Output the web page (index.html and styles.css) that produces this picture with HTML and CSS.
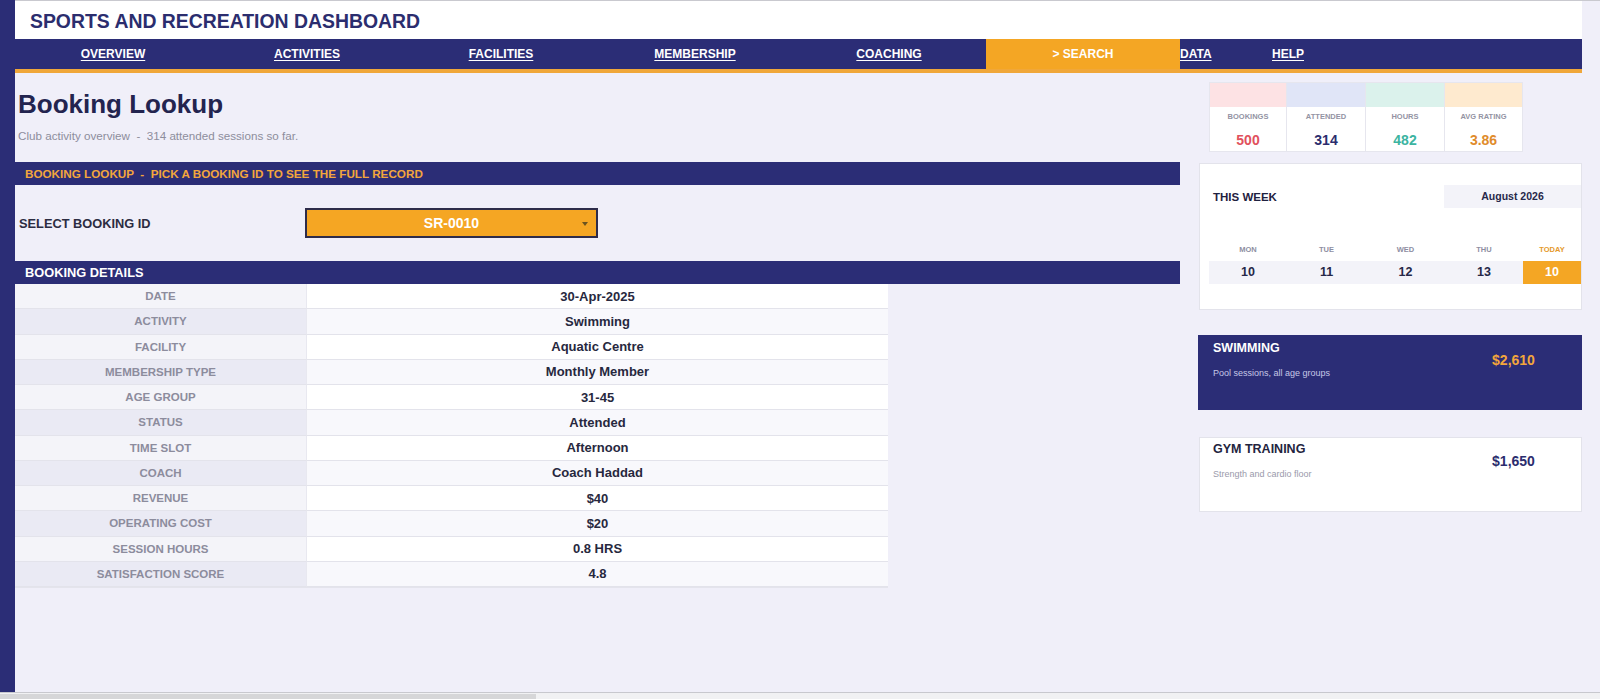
FILE: index.html
```html
<!DOCTYPE html>
<html lang="en">
<head>
<meta charset="utf-8">
<title>Sports and Recreation Dashboard</title>
<link rel="stylesheet" href="styles.css">
</head>
<body>
<div class="window">
  <div class="frame">
    <div class="rail"></div>
    <div class="sheet">
      <header class="masthead">
        <h1 class="masthead-title">SPORTS AND RECREATION DASHBOARD</h1>
      </header>
      <nav class="tabs">
        <a class="tab">OVERVIEW</a>
        <a class="tab">ACTIVITIES</a>
        <a class="tab">FACILITIES</a>
        <a class="tab">MEMBERSHIP</a>
        <a class="tab">COACHING</a>
        <a class="tab tab-active">&gt; SEARCH</a>
        <a class="tab tab-left tab-data">DATA</a>
        <a class="tab tab-left">HELP</a>
      </nav>

      <div class="board">
        <main class="lookup">
          <h2 class="page-title">Booking Lookup</h2>
          <p class="page-sub">Club activity overview  -  314 attended sessions so far.</p>

          <div class="band band-accent">BOOKING LOOKUP  -  PICK A BOOKING ID TO SEE THE FULL RECORD</div>

          <div class="picker">
            <span class="picker-label">SELECT BOOKING ID</span>
            <div class="picker-box">
              <span class="picker-value">SR-0010</span>
              <span class="picker-caret"></span>
            </div>
          </div>

          <div class="band band-plain">BOOKING DETAILS</div>

          <div class="record">
            <div class="rec-key">DATE</div><div class="rec-val">30-Apr-2025</div>
            <div class="rec-key alt">ACTIVITY</div><div class="rec-val alt">Swimming</div>
            <div class="rec-key">FACILITY</div><div class="rec-val">Aquatic Centre</div>
            <div class="rec-key alt">MEMBERSHIP TYPE</div><div class="rec-val alt">Monthly Member</div>
            <div class="rec-key">AGE GROUP</div><div class="rec-val">31-45</div>
            <div class="rec-key alt">STATUS</div><div class="rec-val alt">Attended</div>
            <div class="rec-key">TIME SLOT</div><div class="rec-val">Afternoon</div>
            <div class="rec-key alt">COACH</div><div class="rec-val alt">Coach Haddad</div>
            <div class="rec-key">REVENUE</div><div class="rec-val">$40</div>
            <div class="rec-key alt">OPERATING COST</div><div class="rec-val alt">$20</div>
            <div class="rec-key">SESSION HOURS</div><div class="rec-val">0.8 HRS</div>
            <div class="rec-key alt">SATISFACTION SCORE</div><div class="rec-val alt">4.8</div>
          </div>
        </main>

        <aside class="side">
          <div class="kpis">
            <div class="kpi">
              <div class="kpi-strip strip-pink"></div>
              <div class="kpi-label">BOOKINGS</div>
              <div class="kpi-value val-red">500</div>
            </div>
            <div class="kpi">
              <div class="kpi-strip strip-blue"></div>
              <div class="kpi-label">ATTENDED</div>
              <div class="kpi-value val-navy">314</div>
            </div>
            <div class="kpi">
              <div class="kpi-strip strip-mint"></div>
              <div class="kpi-label">HOURS</div>
              <div class="kpi-value val-teal">482</div>
            </div>
            <div class="kpi">
              <div class="kpi-strip strip-cream"></div>
              <div class="kpi-label">AVG RATING</div>
              <div class="kpi-value val-orange">3.86</div>
            </div>
          </div>

          <section class="week">
            <div class="week-head">
              <span class="week-title">THIS WEEK</span>
              <span class="week-month">August 2026</span>
            </div>
            <div class="week-grid">
              <span class="day-name">MON</span>
              <span class="day-name">TUE</span>
              <span class="day-name">WED</span>
              <span class="day-name">THU</span>
              <span class="day-name day-today">TODAY</span>
              <span class="day-num">10</span>
              <span class="day-num">11</span>
              <span class="day-num">12</span>
              <span class="day-num">13</span>
              <span class="day-num day-num-today">10</span>
            </div>
          </section>

          <section class="tile tile-dark">
            <div class="tile-text">
              <div class="tile-title">SWIMMING</div>
              <div class="tile-sub">Pool sessions, all age groups</div>
            </div>
            <div class="tile-amount">$2,610</div>
          </section>

          <section class="tile tile-light">
            <div class="tile-text">
              <div class="tile-title">GYM TRAINING</div>
              <div class="tile-sub">Strength and cardio floor</div>
            </div>
            <div class="tile-amount">$1,650</div>
          </section>
        </aside>
      </div>
    </div>
  </div>
  <div class="hscroll"><div class="hscroll-thumb"></div></div>
</div>
</body>
</html>
```

FILE: styles.css
```css
* {
  box-sizing: border-box;
}

html, body {
  margin: 0;
  padding: 0;
}

body {
  width: 1600px;
  height: 699px;
  overflow: hidden;
  font-family: "Liberation Sans", Arial, sans-serif;
  background: #f0eff9;
}

.window {
  display: flex;
  flex-direction: column;
  height: 699px;
}

.frame {
  display: flex;
  height: 692px;
}

.rail {
  width: 15px;
  flex: none;
  background: #2b2d76;
}

.sheet {
  flex: 1;
  border-top: 1px solid #c9c9cf;
  background: #f0eff9;
  display: flex;
  flex-direction: column;
}

/* title strip */
.masthead {
  width: 1567px;
  height: 38px;
  background: #ffffff;
  display: flex;
  align-items: center;
  padding-left: 15px;
}

.masthead-title {
  margin: 0;
  font-size: 19.4px;
  font-weight: 700;
  color: #2b2d6e;
  line-height: 22px;
  padding-top: 1px;
}

/* navigation */
.tabs {
  width: 1567px;
  height: 34px;
  background: #2b2d76;
  border-bottom: 4px solid #f0a73a;
  display: flex;
  padding-left: 1px;
}

.tab {
  width: 194px;
  flex: none;
  text-align: center;
  line-height: 30px;
  font-size: 12px;
  font-weight: 700;
  color: #ffffff;
  text-decoration: underline;
  text-underline-offset: 2px;
}

.tab-active {
  background: #f4a624;
  text-decoration: none;
}

.tab-left {
  text-align: left;
  width: auto;
}

.tab-data {
  width: 92px;
}

/* body */
.board {
  display: flex;
  flex: 1;
}

.lookup {
  width: 1165px;
  flex: none;
  display: flex;
  flex-direction: column;
}

.page-title {
  margin: 16px 0 0 3px;
  font-size: 26px;
  line-height: 30px;
  font-weight: 700;
  color: #23244f;
}

.page-sub {
  margin: 10px 0 0 3px;
  font-size: 11.65px;
  line-height: 14px;
  color: #8d8d9c;
  white-space: pre;
}

.band {
  height: 23px;
  background: #2b2d76;
  padding-left: 10px;
  font-weight: 700;
  line-height: 23px;
  white-space: pre;
}

.band-accent {
  margin-top: 19px;
  font-size: 11.7px;
  color: #f3a63c;
}

.band-plain {
  font-size: 12.8px;
  color: #ffffff;
}

.picker {
  display: flex;
  align-items: center;
  margin: 23px 0 23px 0;
  padding-left: 4px;
}

.picker-label {
  width: 286px;
  font-size: 12.8px;
  font-weight: 700;
  color: #2c2c42;
}

.picker-box {
  position: relative;
  width: 293px;
  height: 30px;
  background: #f5a623;
  border: 2px solid #2e2c4a;
  display: flex;
  align-items: center;
  justify-content: center;
}

.picker-value {
  font-size: 14px;
  font-weight: 700;
  color: #ffffff;
}

.picker-caret {
  position: absolute;
  right: 8px;
  top: 12px;
  width: 0;
  height: 0;
  border-left: 3.5px solid transparent;
  border-right: 3.5px solid transparent;
  border-top: 4px solid #6b5420;
}

/* record table */
.record {
  width: 873px;
  display: grid;
  grid-template-columns: 292px 581px;
  grid-auto-rows: 25.25px;
  box-shadow: 0 1px 0 #e4e4ec;
}

.rec-key,
.rec-val {
  display: flex;
  align-items: center;
  justify-content: center;
  border-bottom: 1px solid #e3e3eb;
}

.rec-key {
  background: #f4f4f9;
  border-right: 1px solid #e8e8f0;
  font-size: 11.5px;
  font-weight: 700;
  color: #8c8c9d;
}

.rec-key.alt {
  background: #eaeaf4;
}

.rec-val {
  background: #ffffff;
  font-size: 13px;
  font-weight: 700;
  color: #27283e;
}

.rec-val.alt {
  background: #f8f8fc;
}

/* right column */
.side {
  width: 402px;
  flex: none;
  display: flex;
  flex-direction: column;
  padding-left: 19px;
}

.kpis {
  margin: 9px 0 0 10px;
  display: grid;
  grid-template-columns: 78px 79px 79px 78px;
  width: 314px;
}

.kpi {
  height: 70px;
  background: #ffffff;
  border: 1px solid #e6e6ee;
  border-left-width: 0;
  display: flex;
  flex-direction: column;
  align-items: center;
}

.kpi:first-child {
  border-left-width: 1px;
}

.kpi-strip {
  align-self: stretch;
  height: 24px;
  flex: none;
}

.strip-pink { background: #fde2e4; }
.strip-blue { background: #e0e5f7; }
.strip-mint { background: #dbf2ec; }
.strip-cream { background: #feeacf; }

.kpi-label {
  margin-top: 5px;
  font-size: 7.5px;
  line-height: 9px;
  font-weight: 700;
  color: #9393a3;
}

.kpi-value {
  margin-top: 10.5px;
  font-size: 14px;
  line-height: 17px;
  font-weight: 700;
}

.val-red { color: #e1515d; }
.val-navy { color: #2b2d6e; }
.val-teal { color: #3cb4a1; }
.val-orange { color: #e08b2b; }

.week {
  margin-top: 11px;
  width: 383px;
  height: 147px;
  background: #ffffff;
  border: 1px solid #e3e3eb;
  padding: 21px 0 0 9px;
}

.week-head {
  display: flex;
  align-items: center;
  justify-content: space-between;
  height: 23px;
}

.week-title {
  padding-left: 4px;
  font-size: 11.5px;
  font-weight: 700;
  color: #1f2140;
}

.week-month {
  width: 137px;
  height: 23px;
  line-height: 23px;
  background: #f3f3f9;
  text-align: center;
  font-size: 10.5px;
  font-weight: 700;
  color: #27284a;
}

.week-grid {
  margin-top: 37px;
  display: grid;
  grid-template-columns: 78px 79px 79px 78px 1fr;
  grid-template-rows: 10px 23px;
  row-gap: 6px;
}

.day-name {
  text-align: center;
  font-size: 7.5px;
  line-height: 10px;
  font-weight: 700;
  color: #8e8ea2;
}

.day-today {
  color: #e59a2c;
}

.day-num {
  background: #f3f3f9;
  text-align: center;
  line-height: 23px;
  font-size: 12.5px;
  font-weight: 700;
  color: #262848;
}

.day-num-today {
  background: #f4a624;
  color: #ffffff;
}

.tile {
  height: 75px;
  display: flex;
  padding-left: 15px;
}

.tile-text {
  flex: 1;
}

.tile-title {
  font-size: 12.5px;
  line-height: 15px;
  font-weight: 700;
}

.tile-sub {
  margin-top: 12px;
  font-size: 9px;
  line-height: 11px;
}

.tile-amount {
  width: 137px;
  margin-top: 11.5px;
  text-align: center;
  font-size: 14px;
  line-height: 17px;
  font-weight: 700;
}

.tile-dark {
  margin: 25px 0 0 -1px;
  width: 384px;
  background: #2b2d76;
  padding-top: 6px;
}

.tile-dark .tile-title { color: #ffffff; }
.tile-dark .tile-sub { color: #c6c7e6; }
.tile-dark .tile-amount { color: #f3a63c; margin-top: 10.5px; }

.tile-light {
  margin-top: 27px;
  width: 383px;
  background: #ffffff;
  border: 1px solid #e3e3eb;
  padding-top: 4px;
  padding-left: 13px;
}

.tile-light .tile-title { color: #23243e; }
.tile-light .tile-sub { color: #9a9aab; }
.tile-light .tile-amount { color: #2b2d6e; margin-right: -1px; margin-top: 10.5px; }

/* horizontal scrollbar */
.hscroll {
  height: 7px;
  border-top: 1px solid #c8c8ce;
  background: #f1f1f3;
  padding-top: 1px;
}

.hscroll-thumb {
  width: 536px;
  height: 5px;
  background: #d6d6d8;
}
```
